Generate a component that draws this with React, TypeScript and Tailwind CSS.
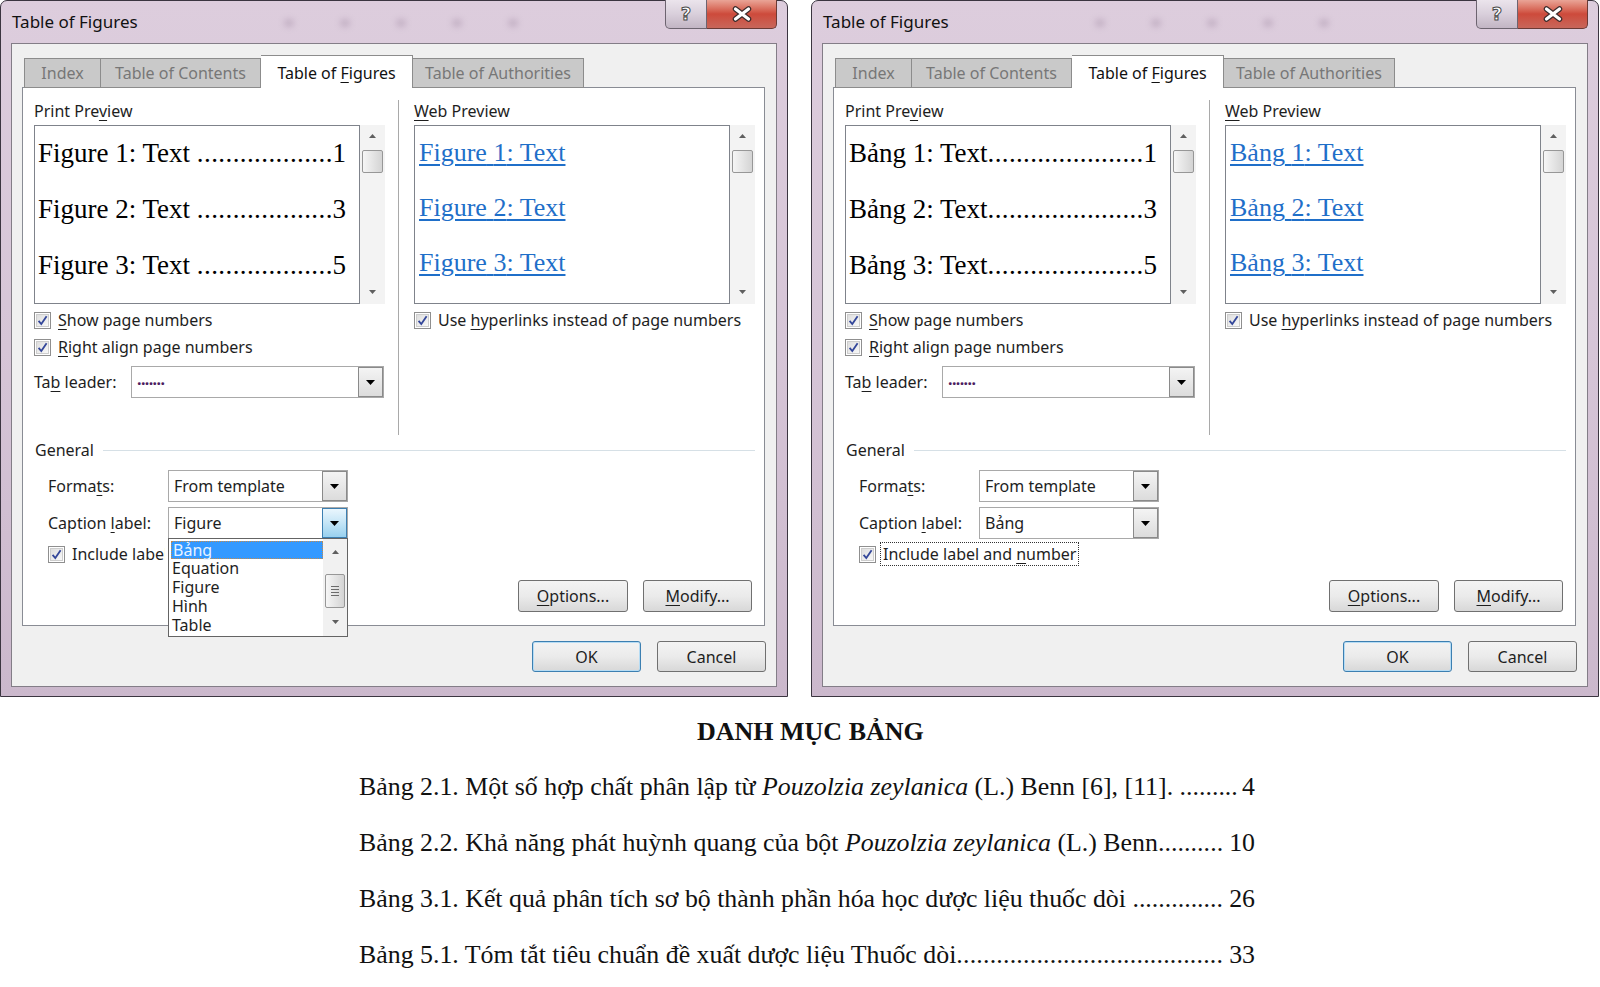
import React from "react";

const ui = "font-['Noto_Sans',sans-serif]";
const serif = "font-['Liberation_Serif','Times_New_Roman',serif]";

type Variant = "figure" | "bang";

function Acc({ children }: { children: React.ReactNode }) {
  return <span className="underline decoration-1 underline-offset-[3px]">{children}</span>;
}

function Down({ color = "#000", w = 9, h = 5 }: { color?: string; w?: number; h?: number }) {
  return (
    <svg width={w} height={h} viewBox={`0 0 ${w} ${h}`}>
      <path d={`M0 0H${w}L${w / 2} ${h}Z`} fill={color} />
    </svg>
  );
}

function Up({ color = "#5f5f5f" }: { color?: string }) {
  return (
    <svg width="7" height="4" viewBox="0 0 7 4">
      <path d="M0 4H7L3.5 0Z" fill={color} />
    </svg>
  );
}

function Checkbox() {
  return (
    <span className="w-[17px] h-[17px] shrink-0 border border-[#8f8f8f] bg-white p-px flex">
      <span className="flex-1 flex items-center justify-center border border-[#cdcdcd] bg-linear-to-br from-[#dedede] to-[#f8f8f8]">
        <svg width="11" height="11" viewBox="0 0 11 11">
          <path d="M1.6 5.8 L4.3 9 L9.6 1.2" fill="none" stroke="#34479a" strokeWidth="1.8" />
        </svg>
      </span>
    </span>
  );
}

function Combo({ value, width, active }: { value: React.ReactNode; width: string; active?: boolean }) {
  return (
    <div className={`${width} h-full flex border border-[#a9a9a9] bg-white`}>
      <div className="flex-1 flex items-center pl-[5px] text-[16px] text-[#1e1e1e]">{value}</div>
      {active ? (
        <div className="w-[25px] h-full border border-[#3c7fb1] bg-linear-to-b from-[#eaf6fd] via-[#c4e5f6] to-[#98d1ef] flex items-center justify-center">
          <Down />
        </div>
      ) : (
        <div className="w-[25px] h-full border border-[#8a8a8a] bg-linear-to-b from-[#f4f4f4] to-[#dcdcdc] flex items-center justify-center">
          <Down />
        </div>
      )}
    </div>
  );
}

function PreviewScroll() {
  return (
    <div className="w-[25px] h-full bg-[#f3f3f3] flex flex-col items-center">
      <div className="h-[22px] flex items-center justify-center">
        <Up />
      </div>
      <div className="mt-[3px] w-[21px] h-[23px] rounded-[2px] border border-[#979797] bg-linear-to-r from-[#f6f6f6] to-[#d4d4d4]" />
      <div className="flex-1" />
      <div className="h-[24px] flex items-center justify-center">
        <Down color="#5f5f5f" w={7} h={4} />
      </div>
    </div>
  );
}

function TitleButtons() {
  return (
    <div className="flex -mt-px">
      <div className="w-[42px] h-[29px] rounded-bl-[5px] border border-t-0 border-[#6d6470] bg-linear-to-b from-[#ebe4ec] via-[#d9cfdb] to-[#c2b5c4] flex items-center justify-center">
        <span className="text-[18px] font-bold leading-none text-white [-webkit-text-stroke:1px_#4a4a4a] font-['DejaVu_Sans',sans-serif]">?</span>
      </div>
      <div className="w-[70px] h-[29px] rounded-br-[5px] border border-t-0 border-l-0 border-[#6b3a35] bg-linear-to-b from-[#e9a497] via-[#cd4a3b] to-[#c8665a] flex items-center justify-center">
        <svg width="22" height="16" viewBox="0 0 22 16">
          <path d="M4.5 3 L17.5 13 M17.5 3 L4.5 13" stroke="#3a2b2b" strokeWidth="5.5" strokeLinecap="round" />
          <path d="M4.5 3 L17.5 13 M17.5 3 L4.5 13" stroke="#ffffff" strokeWidth="3.2" strokeLinecap="round" />
        </svg>
      </div>
    </div>
  );
}

// dot leader: the dots are spread evenly over the space between text and page number
function Leader({ count }: { count: number }) {
  return (
    <span className="flex-1 min-w-0 flex justify-between">
      {Array.from({ length: count }, (_, i) => (
        <span key={i}>.</span>
      ))}
    </span>
  );
}

function Dialog({ v }: { v: Variant }) {
  const label = v === "figure" ? "Figure" : "Bảng";
  const pages = ["1", "3", "5"];

  return (
    <div
      className={`${ui} relative w-[788px] h-[697px] shrink-0 rounded-t-[7px] border border-[#3b3540] bg-linear-to-b from-[#ddcddd] via-[#d6c5d7] to-[#cbb8cc] flex flex-col px-[10px] pb-[9px] text-[#1e1e1e]`}
    >
      {/* title bar */}
      <div className="h-[42px] flex items-start justify-between">
        <div className="pt-[9px] pl-px text-[17px] leading-[24px] text-[#111]">Table of Figures</div>
        <div className="flex gap-[46px] pt-[18px] opacity-40">
          <span className="w-[10px] h-[8px] rounded-full bg-[#9d86a0] blur-[3px]" />
          <span className="w-[10px] h-[8px] rounded-full bg-[#9d86a0] blur-[3px]" />
          <span className="w-[10px] h-[8px] rounded-full bg-[#9d86a0] blur-[3px]" />
          <span className="w-[10px] h-[8px] rounded-full bg-[#9d86a0] blur-[3px]" />
          <span className="w-[10px] h-[8px] rounded-full bg-[#9d86a0] blur-[3px]" />
        </div>
        <TitleButtons />
      </div>

      {/* inner panel */}
      <div className="flex-1 border border-[#837d87] bg-[#f0f0f0] flex flex-col">
        {/* tabs */}
        <div className="relative z-10 flex items-end h-[33px] mt-[11px] ml-[12px] -mb-px text-[16px]">
          <div className="w-[77px] h-[30px] border border-[#8c8c8c] bg-[#c9c9c9] text-[#777] flex items-center justify-center">
            Index
          </div>
          <div className="w-[160px] h-[30px] border border-l-0 border-[#8c8c8c] bg-[#c9c9c9] text-[#777] flex items-center justify-center">
            Table of Contents
          </div>
          <div className="w-[152px] h-[33px] pt-[2px] border border-b-0 border-l-0 border-[#8c8c8c] bg-white text-[#111] flex items-center justify-center">
            <span>
              Table of <Acc>F</Acc>igures
            </span>
          </div>
          <div className="w-[171px] h-[30px] border border-l-0 border-[#8c8c8c] bg-[#c9c9c9] text-[#777] flex items-center justify-center">
            Table of Authorities
          </div>
        </div>

        {/* tab body */}
        <div className="relative ml-[10px] mr-[11px] h-[539px] border border-[#898c94] bg-white flex flex-col text-[16px]">
          <div className="flex mt-[12px] h-[335px]">
            {/* print preview */}
            <div className="ml-[11px] w-[351px] flex flex-col">
              <div className="mt-px h-[20px] leading-[20px]">
                Print Pre<Acc>v</Acc>iew
              </div>
              <div className="mt-[4px] h-[179px] flex">
                <div className={`${serif} w-[326px] h-full border border-[#7f838b] bg-white text-[27px] text-black overflow-hidden`}>
                  <div className="-mt-px">
                    {pages.map((p, i) => (
                      <div key={p} className="h-[56px] flex items-center pl-[3px] pr-[13px] leading-none">
                        <span className="shrink-0 whitespace-pre">
                          {label} {i + 1}: Text{v === "figure" ? " " : ""}
                        </span>
                        <Leader count={v === "figure" ? 19 : 22} />
                        <span className="shrink-0">{p}</span>
                      </div>
                    ))}
                  </div>
                </div>
                <PreviewScroll />
              </div>
              <div className="mt-[6px] h-[20px] flex items-center gap-[7px]">
                <Checkbox />
                <span>
                  <Acc>S</Acc>how page numbers
                </span>
              </div>
              <div className="mt-[7px] h-[20px] flex items-center gap-[7px]">
                <Checkbox />
                <span>
                  <Acc>R</Acc>ight align page numbers
                </span>
              </div>
              <div className="mt-[9px] h-[32px] flex items-center">
                <span className="w-[97px]">
                  Ta<Acc>b</Acc> leader:
                </span>
                <Combo
                  width="w-[253px]"
                  value={<span className="text-[#4b1d60] text-[16px] font-bold -mt-[6px] tracking-[-0.6px]">.......</span>}
                />
              </div>
            </div>

            <div className="ml-[13px] w-px h-full bg-[#a9a9a9]" />

            {/* web preview */}
            <div className="ml-[15px] w-[341px] flex flex-col">
              <div className="mt-px h-[20px] leading-[20px]">
                <Acc>W</Acc>eb Preview
              </div>
              <div className="mt-[4px] h-[179px] flex">
                <div className={`${serif} w-[317px] h-full border border-[#7f838b] bg-white text-[26px] text-[#1f6fc9] overflow-hidden`}>
                  <div className="-mt-px">
                    {pages.map((p, i) => (
                      <div key={p} className="h-[55px] flex items-center pl-[4px] leading-none">
                        <span className="underline decoration-[1.5px] underline-offset-[3px]">
                          {label} {i + 1}: Text
                        </span>
                      </div>
                    ))}
                  </div>
                </div>
                <PreviewScroll />
              </div>
              <div className="mt-[6px] h-[20px] flex items-center gap-[7px]">
                <Checkbox />
                <span>
                  Use <Acc>h</Acc>yperlinks instead of page numbers
                </span>
              </div>
            </div>
          </div>

          {/* general */}
          <div className="mt-[5px] h-[20px] flex items-center">
            <span className="ml-[12px]">General</span>
            <div className="flex-1 ml-[9px] mr-[9px] h-px bg-[#d6e0e6]" />
          </div>
          <div className="mt-[10px] h-[32px] flex items-center">
            <span className="ml-[25px] w-[120px]">
              Forma<Acc>t</Acc>s:
            </span>
            <Combo width="w-[180px]" value="From template" />
          </div>
          <div className="mt-[5px] h-[32px] flex items-center">
            <span className="ml-[25px] w-[120px]">
              Caption <Acc>l</Acc>abel:
            </span>
            <Combo width="w-[180px]" value={label} active={v === "figure"} />
          </div>
          <div className="mt-[6px] h-[18px] flex items-center">
            <span className="ml-[25px]">
              <Checkbox />
            </span>
            {v === "bang" ? (
              <span className="ml-[4px] px-[2px] h-[24px] flex items-center border border-dotted border-[#333]">
                <span className="whitespace-nowrap">
                  Include label and <Acc>n</Acc>umber
                </span>
              </span>
            ) : (
              <span className="ml-[7px] w-[93px] overflow-hidden whitespace-nowrap">Include label</span>
            )}
          </div>
          <div className="mt-[17px] h-[32px] flex justify-end gap-[15px] pr-[12px]">
            <div className="w-[110px] h-full rounded-[3px] border border-[#707070] bg-linear-to-b from-[#f3f3f3] via-[#ebebeb] to-[#d8d8d8] flex items-center justify-center">
              <span>
                <Acc>O</Acc>ptions...
              </span>
            </div>
            <div className="w-[109px] h-full rounded-[3px] border border-[#707070] bg-linear-to-b from-[#f3f3f3] via-[#ebebeb] to-[#d8d8d8] flex items-center justify-center">
              <span>
                <Acc>M</Acc>odify...
              </span>
            </div>
          </div>

          {v === "figure" && (
            <div className="absolute left-[145px] top-[450px] z-20 w-[180px] h-[99px] border border-[#646464] bg-white flex">
              <div className="flex-1 pt-[2px] pl-[2px] text-[16px] leading-[19px]">
                <div className="h-[18px] leading-[16px] border border-dotted border-[#c48a4a] bg-[#3399ff] text-[#e8f3ff] pl-px">
                  Bảng
                </div>
                <div className="pl-px">Equation</div>
                <div className="pl-px">Figure</div>
                <div className="pl-px">Hình</div>
                <div className="pl-px">Table</div>
              </div>
              <div className="w-[24px] h-full bg-[#f1f1f1] flex flex-col items-center">
                <div className="h-[26px] flex items-center justify-center">
                  <Up />
                </div>
                <div className="mt-[9px] w-[20px] h-[34px] rounded-[2px] border border-[#979797] bg-linear-to-r from-[#f6f6f6] to-[#d4d4d4] flex flex-col items-center justify-center gap-[2px]">
                  <span className="w-[8px] h-px bg-[#6b6b6b]" />
                  <span className="w-[8px] h-px bg-[#6b6b6b]" />
                  <span className="w-[8px] h-px bg-[#6b6b6b]" />
                  <span className="w-[8px] h-px bg-[#6b6b6b]" />
                </div>
                <div className="flex-1 flex items-center justify-center">
                  <Down color="#5f5f5f" w={7} h={4} />
                </div>
              </div>
            </div>
          )}
        </div>

        {/* ok / cancel */}
        <div className="mt-[15px] h-[31px] flex justify-end gap-[16px] pr-[10px]">
          <div className="w-[109px] h-full rounded-[3px] border border-[#3c7fb1] shadow-[inset_0_0_0_1px_#b6dcf4] bg-linear-to-b from-[#f3f3f3] via-[#ebebeb] to-[#d8d8d8] flex items-center justify-center">
            OK
          </div>
          <div className="w-[109px] h-full rounded-[3px] border border-[#707070] bg-linear-to-b from-[#f3f3f3] via-[#ebebeb] to-[#d8d8d8] flex items-center justify-center">
            Cancel
          </div>
        </div>
      </div>
    </div>
  );
}

const entries: { text: React.ReactNode; dots: number; page: string }[] = [
  {
    text: (
      <>
        Bảng 2.1. Một số hợp chất phân lập từ <i>Pouzolzia zeylanica</i> (L.) Benn [6], [11].{" "}
      </>
    ),
    dots: 9,
    page: "4",
  },
  {
    text: (
      <>
        Bảng 2.2. Khả năng phát huỳnh quang của bột <i>Pouzolzia zeylanica</i> (L.) Benn
      </>
    ),
    dots: 10,
    page: "10",
  },
  {
    text: <>Bảng 3.1. Kết quả phân tích sơ bộ thành phần hóa học dược liệu thuốc dòi </>,
    dots: 14,
    page: "26",
  },
  {
    text: <>Bảng 5.1. Tóm tắt tiêu chuẩn đề xuất dược liệu Thuốc dòi</>,
    dots: 40,
    page: "33",
  },
];

function DocList() {
  return (
    <div className={`${serif} text-[#111]`}>
      <div className="mt-[21px] h-[28px] pl-[697px] text-[26px] font-bold leading-[28px]">DANH MỤC BẢNG</div>
      <div className="mt-[13px] ml-[359px] w-[896px] text-[25.85px]">
        {entries.map((e) => (
          <div key={e.page} className="h-[56px] flex items-center leading-[56px]">
            <span className="shrink-0 whitespace-pre">{e.text}</span>
            <Leader count={e.dots} />
            <span className="shrink-0 pl-[6px]">{e.page}</span>
          </div>
        ))}
      </div>
    </div>
  );
}

export default function App() {
  return (
    <div className="w-[1600px] h-[987px] bg-white overflow-hidden">
      <div className="flex gap-[23px]">
        <Dialog v="figure" />
        <Dialog v="bang" />
      </div>
      <DocList />
    </div>
  );
}
